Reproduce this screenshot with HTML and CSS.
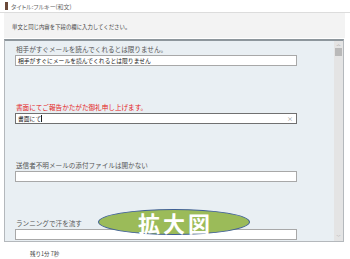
FILE: index.html
```html
<!DOCTYPE html>
<html lang="ja">
<head>
  <meta charset="UTF-8">
  <title>フルキー(和文)</title>
  <link rel="stylesheet" href="styles.css">
</head>
<body>

<div class="cabecera">
  <span class="marca"></span>
  <span class="titulo">タイトル:フルキー(和文)</span>
</div>

<div class="instruccion">単文と同じ内容を下段の欄に入力してください。</div>

<div class="panel">
  <div class="contenido">
    <div class="item">
      <p class="modelo">相手がすぐメールを読んでくれるとは限りません。</p>
      <div class="campo">相手がすぐにメールを読んでくれるとは限りません</div>
    </div>
    <div class="item">
      <p class="modelo error">書面にてご報告かたがた御礼申し上げます。</p>
      <div class="campo activo"><span>書面にて</span><span class="cursor"></span><span class="borrar">×</span></div>
    </div>
    <div class="item">
      <p class="modelo">送信者不明メールの添付ファイルは開かない</p>
      <div class="campo"></div>
    </div>
    <div class="item">
      <p class="modelo">ランニングで汗を流す</p>
      <div class="campo"></div>
    </div>
    <div class="ampliar">拡大図</div>
  </div>
  <div class="barra">
    <span class="flecha">︿</span>
    <span class="pulgar"></span>
    <span class="hueco"></span>
    <span class="flecha">﹀</span>
  </div>
</div>

<div class="tiempo">残り1分 7秒</div>

</body>
</html>
```

FILE: styles.css
```css
body {
  margin: 0;
  background-color: #fff;
  font-family: "Noto Sans CJK JP", sans-serif;
  color: #555;
}
.cabecera {
  display: flex;
  align-items: center;
  height: 12px;
  padding-left: 5px;
  border-bottom: 1px solid #dcdcdc;
}
.marca {
  width: 3px;
  height: 8px;
  background-color: #6b4a3a;
  margin-right: 3px;
}
.titulo {
  font-size: 6px;
  color: #666;
  font-feature-settings: "palt";
}
.instruccion {
  margin-left: 4px;
  width: 341px;
  height: 25px;
  box-sizing: border-box;
  background-color: #f3f3f3;
  padding: 10px 0 0 8px;
  font-size: 5.4px;
  color: #444;
}
.panel {
  display: flex;
  margin: 1px 0 0 4px;
  width: 340px;
  height: 203px;
  box-sizing: border-box;
  border: 1px solid #b4b8bc;
  border-top: 2px solid #8d969c;
  background-color: #e9eff3;
  overflow: hidden;
}
.contenido {
  position: relative;
  flex: 1;
  padding: 4px 0 0 10px;
}
.item {
  margin-bottom: 37px;
}
.modelo {
  margin: 0 0 2px 1px;
  font-size: 6.6px;
  line-height: 8px;
  color: #555;
}
.modelo.error {
  color: #e41a1a;
}
.campo {
  display: flex;
  align-items: center;
  width: 282px;
  height: 11px;
  box-sizing: border-box;
  border: 1px solid #a8a8a8;
  background-color: #fff;
  padding-left: 2px;
  font-size: 5.8px;
  color: #222;
}
.campo.activo {
  border-color: #707070;
}
.cursor {
  width: 1px;
  height: 7px;
  background-color: #222;
}
.borrar {
  margin-left: auto;
  margin-right: 3px;
  font-size: 6px;
  color: #888;
}
.ampliar {
  position: absolute;
  left: 93px;
  top: 168px;
  width: 152px;
  height: 26px;
  box-sizing: border-box;
  border: 1px solid #3f5f95;
  border-radius: 50%;
  background-color: #9bbb59;
  color: #fff;
  font-size: 22px;
  font-weight: bold;
  line-height: 24px;
  text-align: center;
  letter-spacing: 3px;
  text-indent: 3px;
}
.barra {
  display: flex;
  flex-direction: column;
  align-items: center;
  width: 9px;
  background-color: #e4e4e4;
}
.flecha {
  font-size: 4px;
  line-height: 7px;
  color: #999;
}
.pulgar {
  width: 7px;
  height: 8px;
  background-color: #b9b9b9;
}
.hueco {
  flex: 1;
}
.tiempo {
  margin: 8px 0 0 30px;
  font-size: 5.5px;
  color: #444;
}
```
